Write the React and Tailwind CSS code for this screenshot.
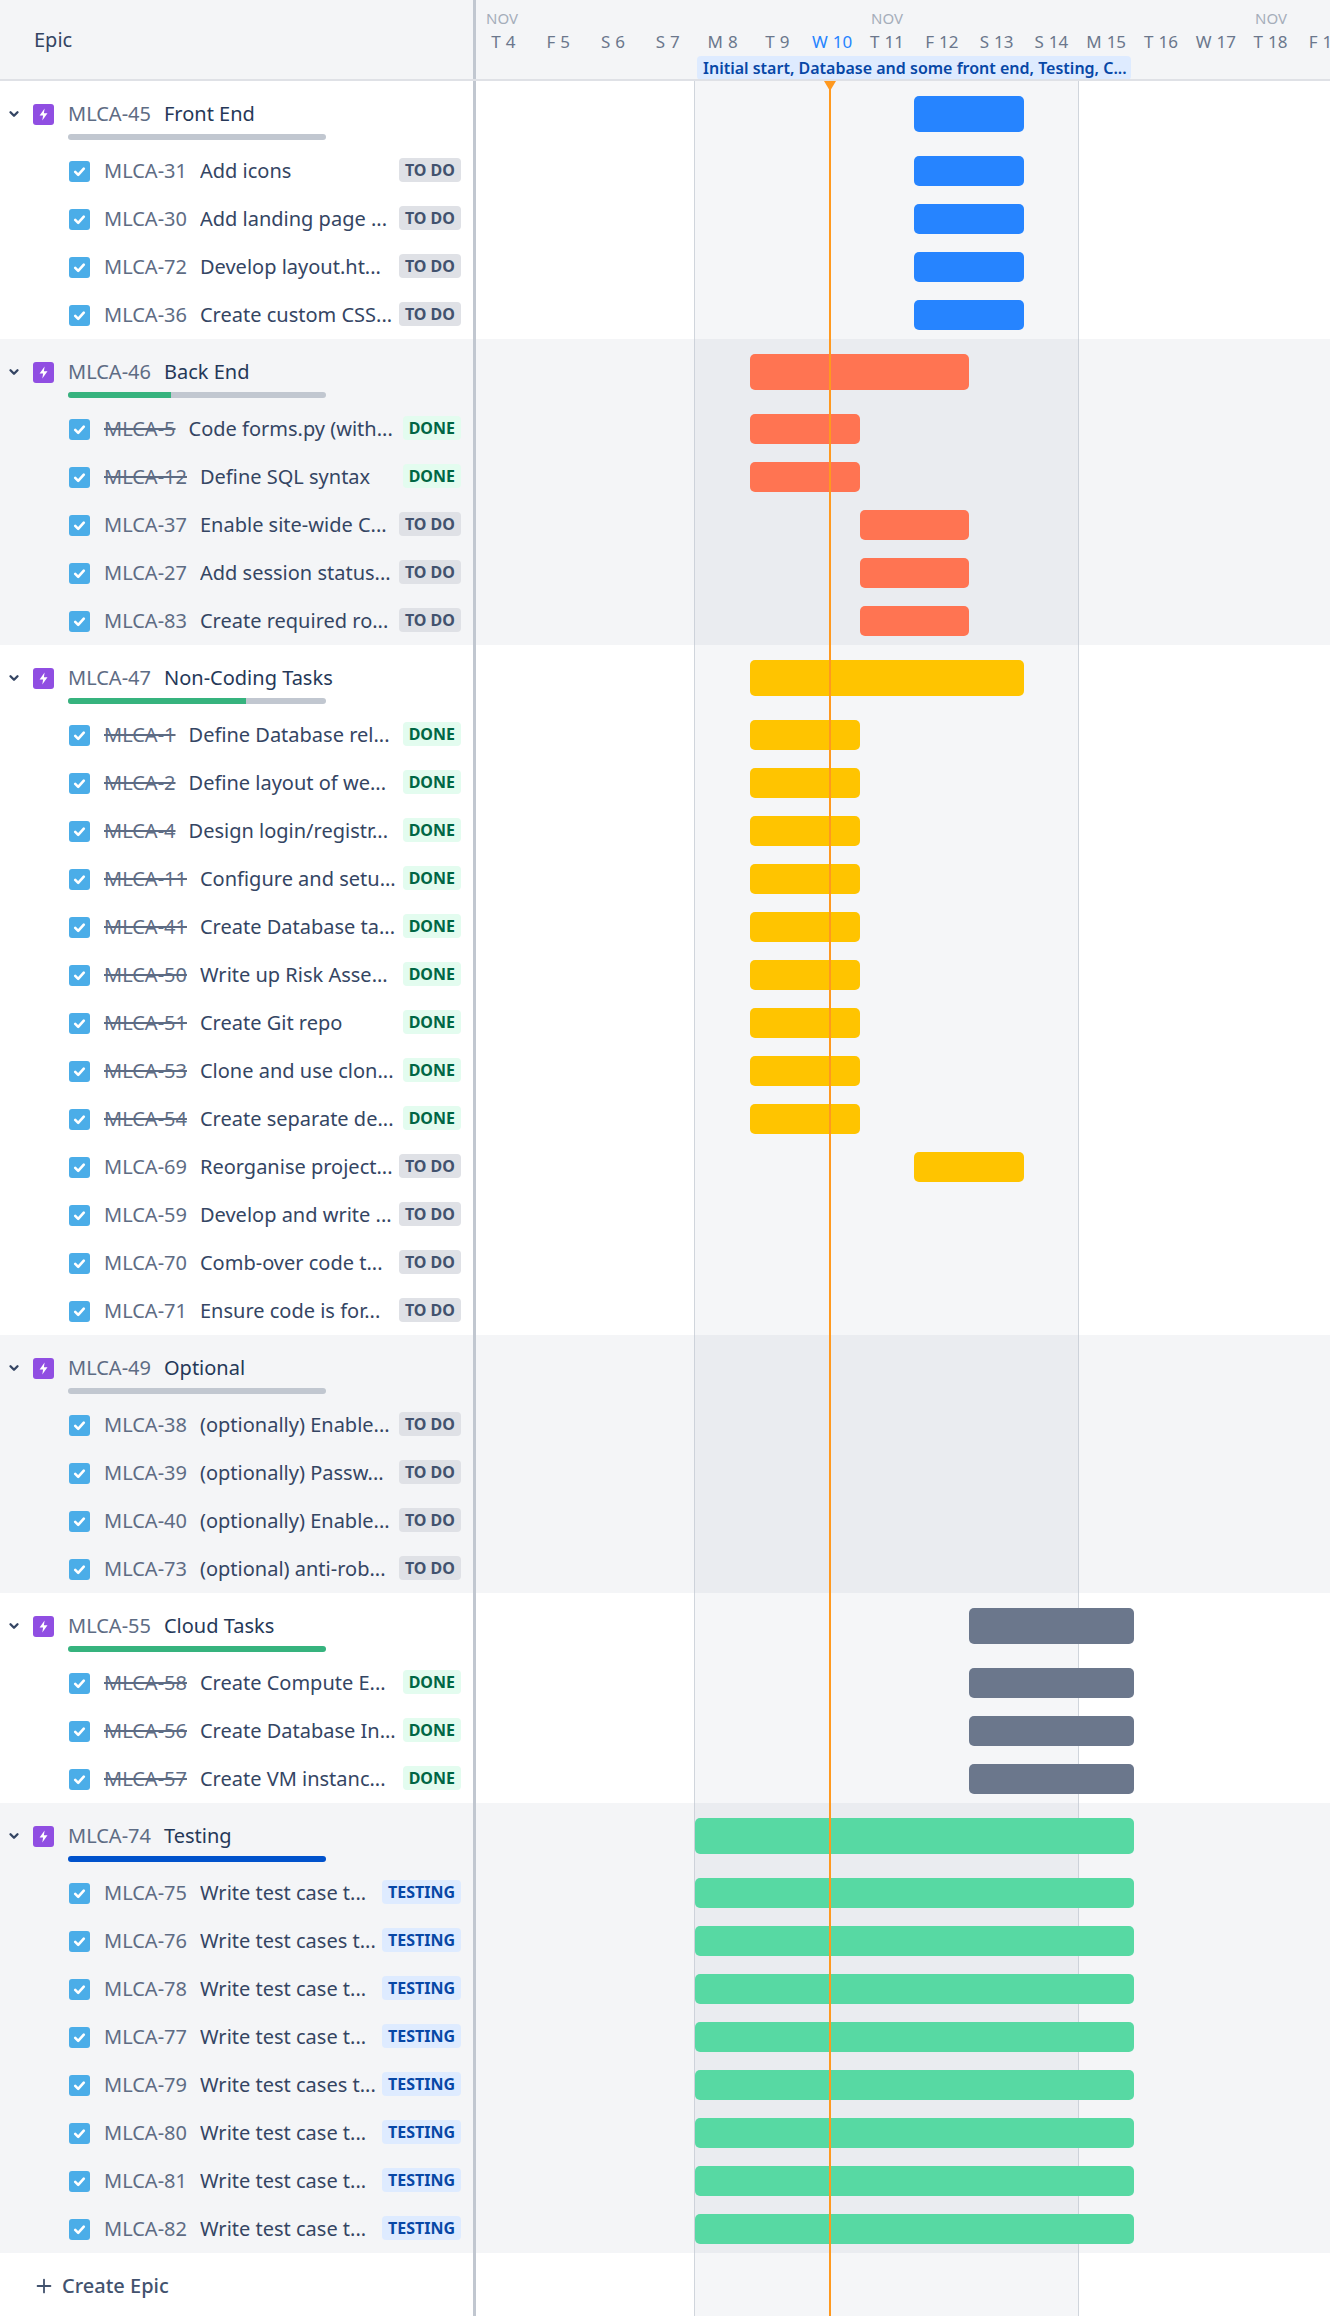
import { ChevronDown, Plus } from 'lucide-react';

const DAY = 54.8;
const DAYS = [
  ['T', '4'], ['F', '5'], ['S', '6'], ['S', '7'], ['M', '8'], ['T', '9'], ['W', '10'], ['T', '11'],
  ['F', '12'], ['S', '13'], ['S', '14'], ['M', '15'], ['T', '16'], ['W', '17'], ['T', '18'], ['F', '19'],
];

const todo = (key, title, from, to) => ({ key, title, status: 'TO DO', from, to });
const done = (key, title, from, to) => ({ key, title, status: 'DONE', from, to });
const testing = (key, title) => ({ key, title, status: 'TESTING', from: 4, to: 12 });

const EPICS = [
  {
    key: 'MLCA-45', title: 'Front End', progress: 0, progressColor: 'bg-[#36b37e]', barColor: 'bg-[#2684ff]', from: 8, to: 10,
    issues: [
      todo('MLCA-31', 'Add icons', 8, 10),
      todo('MLCA-30', 'Add landing page ...', 8, 10),
      todo('MLCA-72', 'Develop layout.ht...', 8, 10),
      todo('MLCA-36', 'Create custom CSS...', 8, 10),
    ],
  },
  {
    key: 'MLCA-46', title: 'Back End', progress: 40, progressColor: 'bg-[#36b37e]', barColor: 'bg-[#ff7452]', from: 5, to: 9,
    issues: [
      done('MLCA-5', 'Code forms.py (with...', 5, 7),
      done('MLCA-12', 'Define SQL syntax', 5, 7),
      todo('MLCA-37', 'Enable site-wide C...', 7, 9),
      todo('MLCA-27', 'Add session status...', 7, 9),
      todo('MLCA-83', 'Create required ro...', 7, 9),
    ],
  },
  {
    key: 'MLCA-47', title: 'Non-Coding Tasks', progress: 69, progressColor: 'bg-[#36b37e]', barColor: 'bg-[#ffc400]', from: 5, to: 10,
    issues: [
      done('MLCA-1', 'Define Database rel...', 5, 7),
      done('MLCA-2', 'Define layout of we...', 5, 7),
      done('MLCA-4', 'Design login/registr...', 5, 7),
      done('MLCA-11', 'Configure and setu...', 5, 7),
      done('MLCA-41', 'Create Database ta...', 5, 7),
      done('MLCA-50', 'Write up Risk Asse...', 5, 7),
      done('MLCA-51', 'Create Git repo', 5, 7),
      done('MLCA-53', 'Clone and use clon...', 5, 7),
      done('MLCA-54', 'Create separate de...', 5, 7),
      todo('MLCA-69', 'Reorganise project...', 8, 10),
      todo('MLCA-59', 'Develop and write ...'),
      todo('MLCA-70', 'Comb-over code t...'),
      todo('MLCA-71', 'Ensure code is for...'),
    ],
  },
  {
    key: 'MLCA-49', title: 'Optional', progress: 0, progressColor: 'bg-[#36b37e]',
    issues: [
      todo('MLCA-38', '(optionally) Enable...'),
      todo('MLCA-39', '(optionally) Passw...'),
      todo('MLCA-40', '(optionally) Enable...'),
      todo('MLCA-73', '(optional) anti-rob...'),
    ],
  },
  {
    key: 'MLCA-55', title: 'Cloud Tasks', progress: 100, progressColor: 'bg-[#36b37e]', barColor: 'bg-[#6b778c]', from: 9, to: 12,
    issues: [
      done('MLCA-58', 'Create Compute E...', 9, 12),
      done('MLCA-56', 'Create Database In...', 9, 12),
      done('MLCA-57', 'Create VM instanc...', 9, 12),
    ],
  },
  {
    key: 'MLCA-74', title: 'Testing', progress: 100, progressColor: 'bg-[#0052cc]', barColor: 'bg-[#57d9a3]', from: 4, to: 12,
    issues: [
      testing('MLCA-75', 'Write test case t...'),
      testing('MLCA-76', 'Write test cases t...'),
      testing('MLCA-78', 'Write test case t...'),
      testing('MLCA-77', 'Write test case t...'),
      testing('MLCA-79', 'Write test cases t...'),
      testing('MLCA-80', 'Write test case t...'),
      testing('MLCA-81', 'Write test case t...'),
      testing('MLCA-82', 'Write test case t...'),
    ],
  },
];

const BADGES = {
  'TO DO': 'bg-[#dfe1e6] text-[#42526e]',
  DONE: 'bg-[#e3fcef] text-[#006644]',
  TESTING: 'bg-[#deebff] text-[#0747a6]',
};

function EpicIcon() {
  return (
    <svg width="21" height="21" viewBox="0 0 21 21" className="shrink-0">
      <rect width="21" height="21" rx="3" fill="#904ee2" />
      <path d="M11.6 4.5 6.6 11.4h3.5l-.8 5.1 5.2-7.2h-3.6z" fill="#fff" />
    </svg>
  );
}

function TaskIcon() {
  return (
    <svg width="21" height="21" viewBox="0 0 21 21" className="shrink-0">
      <rect width="21" height="21" rx="3" fill="#4bade8" />
      <path d="M6.2 10.8l3 3 5.6-6.2" fill="none" stroke="#fff" strokeWidth="2.6" strokeLinecap="round" strokeLinejoin="round" />
    </svg>
  );
}

function Bar({ from, to, color, height }) {
  if (from === undefined) return null;
  return (
    <div
      className={`relative z-10 rounded-[5px] ${color} ${height}`}
      style={{ marginLeft: from * DAY, width: (to - from) * DAY }}
    />
  );
}

function EpicRow({ epic, bg }) {
  return (
    <div className={`flex h-[66px] ${bg}`}>
      <div className="w-[476px] shrink-0 border-r-[3px] border-[#c1c7d0] pl-[8px] pt-[22px]">
        <div className="flex items-center h-[22px]">
          <ChevronDown size={14} strokeWidth={4} className="text-[#344563] w-[14px] -ml-[1px] shrink-0" />
          <div className="ml-[12px]"><EpicIcon /></div>
          <span className="ml-[14px] text-[#5e6c84] whitespace-nowrap">{epic.key}</span>
          <span className="ml-[13px] text-[#253858] whitespace-nowrap">{epic.title}</span>
        </div>
        <div className="ml-[60px] mt-[9px] w-[258px] h-[6px] rounded-full bg-[#c1c7d0] overflow-hidden">
          <div className={`h-full ${epic.progressColor}`} style={{ width: `${epic.progress}%` }} />
        </div>
      </div>
      <div className="flex-1 min-w-0 pt-[15px]">
        <Bar from={epic.from} to={epic.to} color={epic.barColor} height="h-[36px]" />
      </div>
    </div>
  );
}

function IssueRow({ issue, barColor, bg }) {
  const isDone = issue.status === 'DONE';
  return (
    <div className={`flex h-[48px] ${bg}`}>
      <div className="w-[476px] shrink-0 border-r-[3px] border-[#c1c7d0] pl-[69px] pr-[12px] flex items-center">
        <TaskIcon />
        <span className={`ml-[14px] text-[#5e6c84] whitespace-nowrap ${isDone ? 'line-through' : ''}`}>{issue.key}</span>
        <span className="ml-[13px] text-[#344563] whitespace-nowrap flex-1 min-w-0 overflow-hidden">{issue.title}</span>
        <span className={`ml-[4px] -mt-[3px] shrink-0 h-[24px] px-[6px] rounded-[4px] font-bold text-[16px] leading-[24px] ${BADGES[issue.status]}`}>
          {issue.status}
        </span>
      </div>
      <div className="flex-1 min-w-0 flex items-center">
        <Bar from={issue.from} to={issue.to} color={barColor} height="h-[30px]" />
      </div>
    </div>
  );
}

export default function App() {
  return (
    <div className="flex flex-col h-[2316px] w-[1330px] overflow-hidden bg-white text-[20px] leading-[28px] font-['Noto_Sans',sans-serif]">
      <div className="flex h-[81px] shrink-0 bg-[#f4f5f7] border-b-2 border-[#dfe1e6]">
        <div className="w-[476px] shrink-0 border-r-[3px] border-[#c1c7d0] pl-[34px] pt-[26px] text-[#344563]">Epic</div>
        <div className="flex-1 min-w-0 overflow-hidden pt-[8px] text-[#6b778c]">
          <div className="flex h-[20px] text-[15px] leading-[20px] text-[#a5adba]">
            <div className="w-[219px] shrink-0 pl-[10px]">NOV</div>
            <div className="w-[384px] shrink-0 text-center">NOV</div>
            <div className="w-[384px] shrink-0 text-center">NOV</div>
          </div>
          <div className="flex h-[28px] w-[900px] text-[17px] leading-[28px]">
            {DAYS.map(([d, n], i) => (
              <div key={i} className={`w-[54.8px] shrink-0 text-center whitespace-nowrap ${n === '10' ? 'text-[#2684ff]' : ''}`}>
                {d}<span className="ml-[5px]">{n}</span>
              </div>
            ))}
          </div>
          <div className="ml-[221px] w-[434px] h-[24px] rounded-[4px] bg-[#deebff] text-[#0747a6] font-semibold text-[16px] leading-[24px] px-[6px] whitespace-nowrap overflow-hidden">
            Initial start, Database and some front end, Testing, C...
          </div>
        </div>
      </div>

      <div className="relative flex-1 flex flex-col">
        {/* sprint band, sits behind the bars */}
        <div className="absolute inset-y-0 left-[694px] w-[385px] bg-[#091e420a] border-x border-[#c1c7d0]/70" />

        {EPICS.map((epic, i) => {
          const bg = i % 2 ? 'bg-[#f4f5f7]' : 'bg-white';
          return (
            <div key={epic.key}>
              <EpicRow epic={epic} bg={bg} />
              {epic.issues.map((issue) => (
                <IssueRow key={issue.key} issue={issue} barColor={epic.barColor} bg={bg} />
              ))}
            </div>
          );
        })}

        <div className="flex-1 flex">
          <div className="w-[476px] shrink-0 border-r-[3px] border-[#c1c7d0] pl-[33px] pt-[19px]">
            <div className="flex items-center h-[28px] text-[#42526e] font-medium">
              <Plus size={22} strokeWidth={2} className="shrink-0" />
              <span className="ml-[7px]">Create Epic</span>
            </div>
          </div>
        </div>

        {/* today marker */}
        <div className="absolute inset-y-0 left-[829px] w-[2px] bg-[#ff991f] z-20" />
        <svg width="12" height="10" viewBox="0 0 12 10" className="absolute top-0 left-[824px] z-20">
          <path d="M0 0h12L6 10z" fill="#ff991f" />
        </svg>
      </div>
    </div>
  );
}
